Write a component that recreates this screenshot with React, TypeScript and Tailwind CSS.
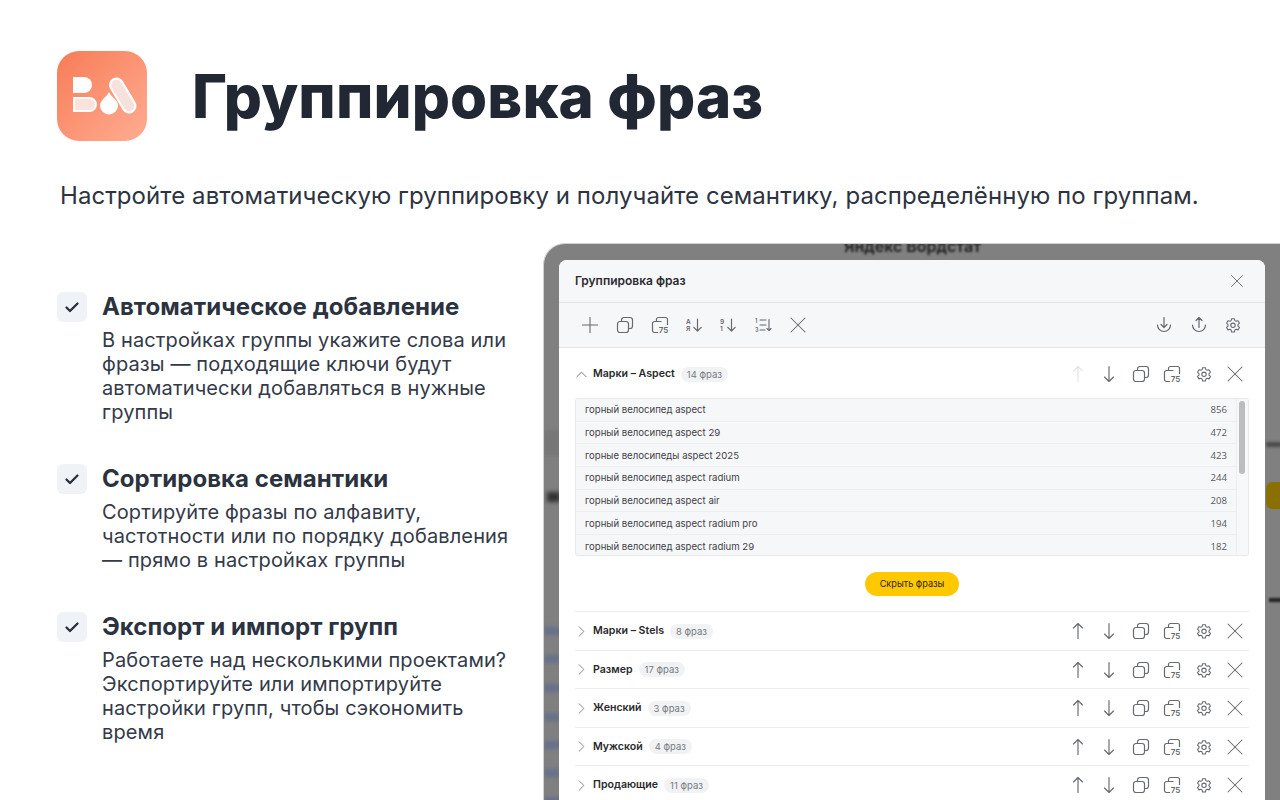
import { ChevronRight, ChevronUp, Plus, X } from "lucide-react";

const ic = "#66696f";

function Logo() {
  return (
    <svg width="90" height="90" viewBox="0 0 90 90" fill="none">
      <path d="M16 26H27a8 8 0 0 1 0 16H16Z" fill="#fff" />
      <path d="M17 47H32.500a6.500 6.500 0 0 1 0 13H17Z" fill="#fbe3dc" stroke="#fff" strokeWidth="2" />
      <path d="M52 41C54 46 61 49 61 54.500a9 9 0 0 1-18 0C43 49 50 46 52 41Z" fill="#fff" />
      <path d="M59.500 34L72 55" stroke="#fff" strokeWidth="15" strokeLinecap="round" />
      <path d="M59.500 34L72 55" stroke="#f5e2dd" strokeWidth="10.500" strokeLinecap="round" />
    </svg>
  );
}

function Check() {
  return (
    <div className="w-[30px] h-[30px] shrink-0 rounded-md bg-[#eff2f7] flex items-center justify-center">
      <svg width="16" height="16" viewBox="0 0 16 16" fill="none">
        <path d="M2.500 8.500L6 12L13.500 4.500" stroke="#2a303c" strokeWidth="2.300" strokeLinecap="round" strokeLinejoin="round" />
      </svg>
    </div>
  );
}

function Feature({ title, lines }: { title: string; lines: string[] }) {
  return (
    <div>
      <div className="flex items-center gap-[15px] h-[30px]">
        <Check />
        <div className="text-[24px] leading-[30px] font-bold tracking-[0.05px] text-[#2b3240] whitespace-nowrap">{title}</div>
      </div>
      <div className="mt-[6px] ml-[45px] text-[20px] leading-[24px] tracking-[0.13px] text-[#333a48]">
        {lines.map((l) => (
          <div key={l} className="whitespace-nowrap">{l}</div>
        ))}
      </div>
    </div>
  );
}

function Arrow({ up, color = ic }: { up?: boolean; color?: string }) {
  return (
    <svg width="18" height="18" viewBox="0 0 18 18" fill="none" stroke={color} strokeWidth="1.150" strokeLinecap="round" strokeLinejoin="round">
      {up ? <path d="M9 16.500V1.500M4.500 6L9 1.500 13.500 6" /> : <path d="M9 1.500V16.500M4.500 12L9 16.500 13.500 12" />}
    </svg>
  );
}

function Copy({ s = 18 }: { s?: number }) {
  return (
    <svg width={s} height={s} viewBox="0 0 18 18" fill="none" stroke={ic} strokeWidth="1.200">
      <rect x="1.500" y="5.500" width="11" height="11" rx="2.500" />
      <path d="M5.500 5.500V4A2.500 2.500 0 0 1 8 1.500h6A2.500 2.500 0 0 1 16.500 4v6a2.500 2.500 0 0 1-2.500 2.500h-1.500" />
    </svg>
  );
}

function Copy75({ s = 18 }: { s?: number }) {
  return (
    <svg width={s} height={s} viewBox="0 0 18 18" fill="none" stroke={ic} strokeWidth="1.200">
      <path d="M7 16.500H3.500a2 2 0 0 1-2-2V7.500a2 2 0 0 1 2-2h7" />
      <path d="M5.500 5.500V3.500a2 2 0 0 1 2-2h7a2 2 0 0 1 2 2v5.500" />
      <text x="7.800" y="17" fontSize="8" fontWeight="600" fill={ic} stroke="none" fontFamily="Inter, sans-serif">75</text>
    </svg>
  );
}

function Gear({ s = 16 }: { s?: number }) {
  return (
    <svg width={s} height={s} viewBox="0 0 24 24" fill="none" stroke={ic} strokeWidth="1.600" strokeLinejoin="round">
      <path d="M9.900 2.500h4.200l.7 2.900 1.900 1.100 2.900-.8 2.100 3.600-2.200 2.100v2.200l2.200 2.100-2.100 3.600-2.900-.8-1.900 1.100-.7 2.900H9.900l-.7-2.900-1.900-1.100-2.900.8-2.100-3.600 2.200-2.100v-2.200L2.300 9.300l2.100-3.600 2.900.8 1.900-1.100Z" />
      <circle cx="12" cy="12.500" r="3.300" />
    </svg>
  );
}

function SortIcon({ top, bottom }: { top: string; bottom: string }) {
  return (
    <svg width="18" height="18" viewBox="0 0 18 18" fill="none" stroke={ic} strokeWidth="1.200" strokeLinecap="round" strokeLinejoin="round">
      <text x="1" y="7.500" fontSize="6.500" fontWeight="600" fill={ic} stroke="none" fontFamily="Inter, sans-serif">{top}</text>
      <text x="1" y="15" fontSize="6.500" fontWeight="600" fill={ic} stroke="none" fontFamily="Inter, sans-serif">{bottom}</text>
      <path d="M12.500 3v12M8.800 11.300l3.700 3.700 3.700-3.700" />
    </svg>
  );
}

function OrderIcon() {
  return (
    <svg width="18" height="18" viewBox="0 0 18 18" fill="none" stroke={ic} strokeWidth="1.100" strokeLinecap="round" strokeLinejoin="round">
      <text x="1" y="7" fontSize="5.500" fontWeight="600" fill={ic} stroke="none" fontFamily="Inter, sans-serif">1</text>
      <text x="1" y="15.500" fontSize="5.500" fontWeight="600" fill={ic} stroke="none" fontFamily="Inter, sans-serif">3</text>
      <path d="M6 4h6M6 9h6M6 14h5M15 3.500V14.500M13 12.500l2 2 2-2" />
    </svg>
  );
}

function TrayArrow({ up }: { up?: boolean }) {
  return (
    <svg width="18" height="18" viewBox="0 0 18 18" fill="none" stroke={ic} strokeWidth="1.200" strokeLinecap="round" strokeLinejoin="round">
      <path d="M2.500 9a6.500 6.500 0 1 0 13 0" />
      {up ? <path d="M9 11.500V1.500M6 4.500l3-3 3 3" /> : <path d="M9 1.500V11.500M6 8.500l3 3 3-3" />}
    </svg>
  );
}

function Btn({ children, w = 31.500 }: { children: React.ReactNode; w?: number }) {
  return <div className="flex justify-center items-center shrink-0" style={{ width: w }}>{children}</div>;
}

function RowActions({ faded }: { faded?: boolean }) {
  return (
    <div className="ml-auto flex items-center mr-[-2px]">
      <Btn><Arrow up color={faded ? "#e3e4e6" : ic} /></Btn>
      <Btn><Arrow /></Btn>
      <Btn><Copy /></Btn>
      <Btn><Copy75 /></Btn>
      <Btn><Gear /></Btn>
      <Btn><X size={28} strokeWidth={0.9} color={ic} /></Btn>
    </div>
  );
}

function Title({ name, count }: { name: string; count: string }) {
  return (
    <>
      <div className="text-[10.600px] font-semibold text-[#27282b] ml-[6px] whitespace-nowrap">{name}</div>
      <div className="ml-[6px] h-[15px] px-[6px] rounded-full bg-[#f1f2f4] text-[#777a80] text-[9.500px] leading-[15px] whitespace-nowrap">{count}</div>
    </>
  );
}

const phrases: [string, number][] = [
  ["горный велосипед aspect", 856],
  ["горный велосипед aspect 29", 472],
  ["горные велосипеды aspect 2025", 423],
  ["горный велосипед aspect radium", 244],
  ["горный велосипед aspect air", 208],
  ["горный велосипед aspect radium pro", 194],
  ["горный велосипед aspect radium 29", 182],
];

const groups: [string, string][] = [
  ["Марки – Stels", "8 фраз"],
  ["Размер", "17 фраз"],
  ["Женский", "3 фраз"],
  ["Мужской", "4 фраз"],
  ["Продающие", "11 фраз"],
];

export default function App() {
  return (
    <div className="relative w-[1280px] h-[800px] overflow-hidden bg-white font-['Inter',sans-serif]">
      <div className="flex items-center pt-[51px] pl-[57px] gap-[45px]">
        <div className="w-[90px] h-[90px] rounded-[22px] bg-linear-to-br from-[#f67c56] to-[#ffac92]">
          <Logo />
        </div>
        <h1 className="text-[60px] leading-[90px] font-extrabold tracking-[0.13px] text-[#212833] whitespace-nowrap">Группировка фраз</h1>
      </div>
      <p className="mt-[40px] ml-[60px] text-[24px] leading-[30px] tracking-[0.07px] text-[#2d3340] whitespace-nowrap">
        Настройте автоматическую группировку и получайте семантику, распределённую по группам.
      </p>

      <div className="flex mt-[32px]">
        <div className="w-[543px] shrink-0 pl-[57px] pt-[49px] flex flex-col gap-[40px]">
          <Feature
            title="Автоматическое добавление"
            lines={["В настройках группы укажите слова или", "фразы — подходящие ключи будут", "автоматически добавляться в нужные", "группы"]}
          />
          <Feature
            title="Сортировка семантики"
            lines={["Сортируйте фразы по алфавиту,", "частотности или по порядку добавления", "— прямо в настройках группы"]}
          />
          <Feature
            title="Экспорт и импорт групп"
            lines={["Работаете над несколькими проектами?", "Экспортируйте или импортируйте", "настройки групп, чтобы сэкономить", "время"]}
          />
        </div>

        <div className="relative w-[737px] h-[558px] overflow-hidden rounded-tl-[22px] bg-[#808080] border-l border-t border-[#d0d0d0] pt-[16px] pl-[15px]">
          <div className="absolute left-[300px] top-[-10px] text-[16px] font-semibold text-[#1c1c1c] blur-[1.200px] whitespace-nowrap">Яндекс Вордстат</div>
          <div className="absolute left-0 top-[186px] w-[16px] h-[26px] bg-[#777777] blur-[2px]" />
          <div className="absolute left-[3px] top-[248px] w-[13px] h-[10px] bg-[#333] blur-[2px]" />
          {[383, 411, 440, 469, 497, 525, 553].map((t) => (
            <div key={t} className="absolute left-0 w-[16px] h-[8px] bg-[#66708a] blur-[2px]" style={{ top: t }} />
          ))}
          <div className="absolute left-[722px] top-[198px] w-[16px] h-[5px] bg-[#4b4b4b] blur-[1.500px]" />
          <div className="absolute left-[722px] top-[238px] w-[20px] h-[27px] rounded-l-md bg-[#8a7000]" />
          <div className="absolute left-[725px] top-[354px] w-[14px] h-[4px] bg-[#222] blur-[1px]" />

          <div className="relative w-[706px] h-[541px] bg-white rounded-t-[8px] overflow-hidden">
            <div className="h-[43px] bg-[#f6f7f9] border-b border-[#e3e5e8] flex items-center pl-[16px] pr-[17px]">
              <div className="text-[12px] font-semibold text-[#2a2b2e]">Группировка фраз</div>
              <X className="ml-auto" size={22} strokeWidth={1} color={ic} />
            </div>
            <div className="h-[45px] bg-[#f6f7f9] border-b border-[#e3e5e8] flex items-center pl-[13px] pr-[15px]">
              <Btn w={35}><Plus size={26} strokeWidth={1} color={ic} /></Btn>
              <Btn w={35}><Copy /></Btn>
              <Btn w={35}><Copy75 /></Btn>
              <Btn w={33}><SortIcon top="А" bottom="Я" /></Btn>
              <Btn w={35}><SortIcon top="9" bottom="1" /></Btn>
              <Btn w={35}><OrderIcon /></Btn>
              <Btn w={35}><X size={28} strokeWidth={0.9} color={ic} /></Btn>
              <div className="ml-auto flex items-center">
                <Btn w={35}><TrayArrow /></Btn>
                <Btn w={35}><TrayArrow up /></Btn>
                <Btn w={34}><Gear /></Btn>
              </div>
            </div>

            <div className="px-[16px]">
              <div className="h-[50px] pt-[2px] flex items-center">
                <div className="w-[12px] shrink-0 flex justify-center">
                  <ChevronUp size={19} strokeWidth={1} color="#55585e" className="shrink-0" />
                </div>
                <Title name="Марки – Aspect" count="14 фраз" />
                <RowActions faded />
              </div>

              <div className="relative h-[158px] rounded-[3px] border border-[#e6e8eb] bg-[#f6f7f9] overflow-hidden flex">
                <div className="flex-1 min-w-0">
                  {phrases.map(([p, n], i) => (
                    <div key={p} className={`h-[22.700px] pt-[1px] flex items-center pl-[9px] pr-[9px] text-[9.600px] text-[#3f4146] ${i < 6 ? "border-b border-[#eceef0]" : ""}`}>
                      <span className="whitespace-nowrap">{p}</span>
                      <span className="ml-auto font-['Open_Sans',sans-serif] text-[#55575c]">{n}</span>
                    </div>
                  ))}
                </div>
                <div className="w-[12px] shrink-0 bg-[#f7f8f9] border-l border-[#eceef0] pt-[2px] pl-[2px]">
                  <div className="w-[6px] h-[73px] rounded-full bg-[#bdbdbd]" />
                </div>
              </div>

              <div className="flex justify-center mt-[16px] mb-[15px]">
                <div className="w-[94px] h-[24px] rounded-full bg-[#ffc800] text-[9.200px] leading-[24px] text-center text-[#2a2410]">Скрыть фразы</div>
              </div>

              {groups.map(([name, count]) => (
                <div key={name} className="h-[38.500px] pt-[1px] border-t border-[#eceded] flex items-center">
                  <div className="w-[12px] shrink-0 flex justify-center">
                    <ChevronRight size={19} strokeWidth={1} color="#6a6d73" className="shrink-0" />
                  </div>
                  <Title name={name} count={count} />
                  <RowActions />
                </div>
              ))}
            </div>
          </div>
        </div>
      </div>
    </div>
  );
}
